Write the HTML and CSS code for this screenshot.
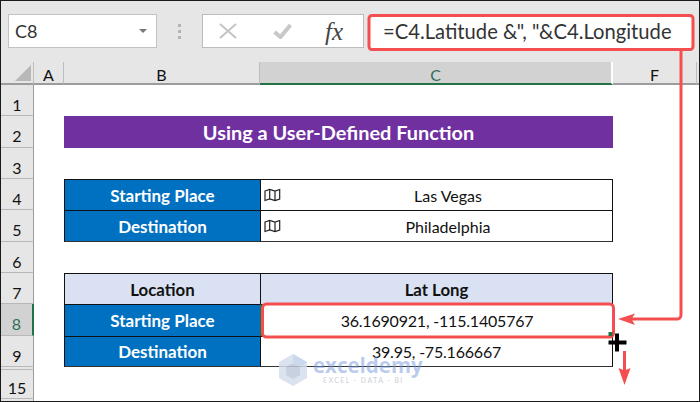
FILE: index.html
```html
<!DOCTYPE html>
<html lang="en">
<head>
<meta charset="utf-8">
<title>Using a User-Defined Function</title>
<link rel="stylesheet" href="styles.css">
</head>
<body>
<div class="app">
  <header class="toolbar">
    <div class="namebox"><span class="name">C8</span><span class="caret"></span></div>
    <div class="grip"><i></i><i></i><i></i></div>
    <div class="fxbox">
      <svg class="tool tool-x" width="18" height="16" viewBox="0 0 18 16"><path d="M1 1l16 14M17 1L1 15" fill="none" stroke="#c4c4c4" stroke-width="2"/></svg>
      <svg class="tool tool-check" width="19" height="16" viewBox="0 0 19 16"><path d="M1.5 9l6 5L17.5 2" fill="none" stroke="#c8c8c8" stroke-width="4"/></svg>
      <span class="fx">fx</span>
    </div>
    <div class="formula">=C4.Latitude &amp;", "&amp;C4.Longitude</div>
  </header>

  <main class="sheet">
    <div class="corner"><svg width="16" height="16" viewBox="0 0 16 16"><path d="M16 0v16H0z" fill="#b8b8b8"/></svg></div>
    <div class="ch">A</div>
    <div class="ch">B</div>
    <div class="ch ch-active">C</div>
    <div class="ch ch-f">F</div>
    <div class="ch ch-end"></div>

    <div class="rh row1">1</div>
    <div class="rh row2">2</div>
    <div class="rh row3">3</div>
    <div class="rh row4">4</div>
    <div class="rh row5">5</div>
    <div class="rh row6">6</div>
    <div class="rh row7">7</div>
    <div class="rh rh-active row8">8</div>
    <div class="rh row9">9</div>
    <div class="rh row-gap"></div>
    <div class="rh row15">15</div>
    <div class="rh row-end"></div>

    <div class="title row2">Using a User-Defined Function</div>

    <div class="cell label colB row4">Starting Place</div>
    <div class="cell value colC row4"><svg class="map" width="17" height="14" viewBox="0 0 17 14"><path d="M1 3l4.700-1.500L11 3l4.700-1.500v9.500L11 12.500 5.700 11 1 12.500zM5.700 1.500V11M11 3v9.500" fill="none" stroke="#222" stroke-width="1.200"/></svg><span class="geo">Las Vegas</span></div>
    <div class="cell label colB row5 bottom">Destination</div>
    <div class="cell value colC row5 bottom"><svg class="map" width="17" height="14" viewBox="0 0 17 14"><path d="M1 3l4.700-1.500L11 3l4.700-1.500v9.500L11 12.500 5.700 11 1 12.500zM5.700 1.500V11M11 3v9.500" fill="none" stroke="#222" stroke-width="1.200"/></svg><span class="geo">Philadelphia</span></div>

    <div class="cell head colB row7">Location</div>
    <div class="cell head colC row7">Lat Long</div>
    <div class="cell label colB row8">Starting Place</div>
    <div class="cell value num colC row8 selected">36.1690921, -115.1405767</div>
    <div class="cell label colB row9 bottom">Destination</div>
    <div class="cell value num colC row9 bottom">39.95, -75.166667</div>
  </main>

  <div class="watermark">
    <svg class="wm-logo" width="28" height="32" viewBox="0 0 28 32"><path d="M14 0l14 8v16l-14 8-14-8V8z" fill="#d5deee"/><path d="M14 9l7 4v8l-7 4-7-4v-8z" fill="#bfc9da"/><path d="M14 0l14 8-7 5-7-4z" fill="#c4d2ec"/></svg>
    <div class="wm-text"><span class="wm-name">exceldemy</span><span class="wm-sub">EXCEL - DATA - BI</span></div>
  </div>

  <svg class="callouts" width="700" height="402" viewBox="0 0 700 402">
    <g fill="none" stroke="#f44e50" stroke-width="3">
      <rect x="369" y="15.500" width="324" height="34" rx="3"/>
      <rect x="262.500" y="304" width="351" height="33" rx="4"/>
      <path d="M681 50v265a4 4 0 0 1-4 4H628"/>
      <path d="M624.500 351v20"/>
    </g>
    <path d="M618 319l17-5.500-3.500 5.500 3.500 6z" fill="#f44e50"/>
    <path d="M624.500 385l-6-17 6 2.500 6-2.500z" fill="#f44e50"/>
    <rect x="608.500" y="332" width="4" height="4" fill="#217346"/>
    <path d="M617 333.500v18M608.500 342.500h18" fill="none" stroke="#000" stroke-width="4"/>
  </svg>
</div>
</body>
</html>
```
FILE: styles.css
```css
* { box-sizing: border-box; }
html, body { margin: 0; padding: 0; }
body { width: 700px; height: 402px; overflow: hidden; background: #fff; font-family: "Lato", "Liberation Sans", sans-serif; color: #111; }

.app { position: relative; width: 700px; height: 402px; border: 1px solid #1a1a1a; background: #e6e6e6; display: flex; flex-direction: column; overflow: hidden; }

.toolbar { flex: 0 0 61px; display: flex; align-items: flex-start; padding: 13px 0 0 7px; }
.namebox { width: 149px; height: 34px; background: #fff; border: 1px solid #c2c2c2; display: flex; align-items: center; justify-content: space-between; padding: 0 9px 0 6px; }
.name { font-size: 18px; color: #333; }
.caret { width: 0; height: 0; border-left: 4px solid transparent; border-right: 4px solid transparent; border-top: 4px solid #777; }
.grip { width: 45px; height: 34px; display: flex; flex-direction: column; align-items: center; justify-content: center; gap: 3px; }
.grip i { display: block; width: 3px; height: 3px; background: #b4b4b4; }
.fxbox { width: 162px; height: 34px; background: #fff; border: 1px solid #bcbcbc; display: flex; align-items: center; padding-left: 16px; }
.tool-x { margin-right: 36px; }
.tool-check { margin-right: 33px; }
.fx { font-family: "Liberation Serif", serif; font-style: italic; font-size: 25px; color: #444; line-height: 1; }
.formula { flex: 1; height: 34px; margin: 1px 6px 0 5px; background: #fff; padding-left: 14px; font-size: 20.200px; line-height: 33px; color: #333; white-space: nowrap; }

.sheet { flex: 1; display: grid; background: #fff;
  grid-template-columns: 33px 30px 196px 353px 84px 1fr;
  grid-template-rows: 23px 31px 32px 31px 31px 32px 31px 31px 32px 31px 3px 29px 1fr; }

.corner { background: #e6e6e6; border-bottom: 2px solid #9c9c9c; border-right: 1px solid #bdbdbd; display: flex; align-items: flex-end; padding: 0 0 2px 14px; }
.ch { background: #e6e6e6; border-bottom: 2px solid #9c9c9c; border-right: 1px solid #bdbdbd; display: flex; align-items: center; justify-content: center; font-size: 16px; padding-top: 3px; }
.ch-active { background: #d2d2d2; color: #2f6f58; border-right: 2px solid #fff; border-bottom-color: #217346; box-shadow: inset -1px 0 0 #d2d2d2; }
.ch-end { border-right: 0; }

.rh { grid-column: 1; background: #e6e6e6; border-right: 1px solid #9c9c9c; border-bottom: 1px solid #b8b8b8; display: flex; align-items: center; justify-content: center; font-size: 16px; padding-top: 8px; }
.rh-active { background: #d2d2d2; color: #2f6f58; border-right: 2px solid #217346; }
.row1 { grid-row: 2; }
.row2 { grid-row: 3; }
.row3 { grid-row: 4; }
.row4 { grid-row: 5; }
.row5 { grid-row: 6; }
.row6 { grid-row: 7; }
.row7 { grid-row: 8; }
.row8 { grid-row: 9; }
.row9 { grid-row: 10; }
.row-gap { grid-row: 11; padding: 0; }
.row15 { grid-row: 12; padding-top: 6px; }
.row-end { grid-row: 13; border-bottom: 0; padding: 0; }

.colB { grid-column: 3; }
.colC { grid-column: 4; }

.title { grid-column: 3 / 5; background: #7030a0; color: #fff; font-size: 19.900px; font-weight: 700; display: flex; align-items: center; justify-content: center; }

.cell { border-top: 1px solid #111; border-left: 1px solid #111; display: flex; align-items: center; justify-content: center; font-size: 16px; position: relative; }
.colC.cell { border-right: 1px solid #111; }
.bottom { border-bottom: 1px solid #333; }
.label { background: #0070c0; color: #fff; font-weight: 700; font-size: 17px; }
.head { background: #d9e1f2; font-weight: 700; font-size: 16.800px; }
.value { background: #fff; }
.num { letter-spacing: -.2px; }
.selected { border-left: 2px solid #217346; }
.map { flex: none; margin-left: 3px; }
.value:has(.map) { justify-content: flex-start; }
.geo { flex: 1; text-align: center; padding-left: 3px; }

.watermark { position: absolute; left: 278px; top: 353px; display: flex; gap: 6px; opacity: .85; pointer-events: none; }
.wm-text { display: flex; flex-direction: column; }
.wm-name { font-family: "Open Sans", sans-serif; font-size: 20.500px; font-weight: 700; line-height: 22px; color: rgba(120,155,220,.6); }
.wm-sub { font-size: 7px; letter-spacing: 1.400px; color: #c4c8d0; padding-left: 10px; line-height: 9px; }

.callouts { position: absolute; left: -1px; top: -1px; pointer-events: none; }
```
